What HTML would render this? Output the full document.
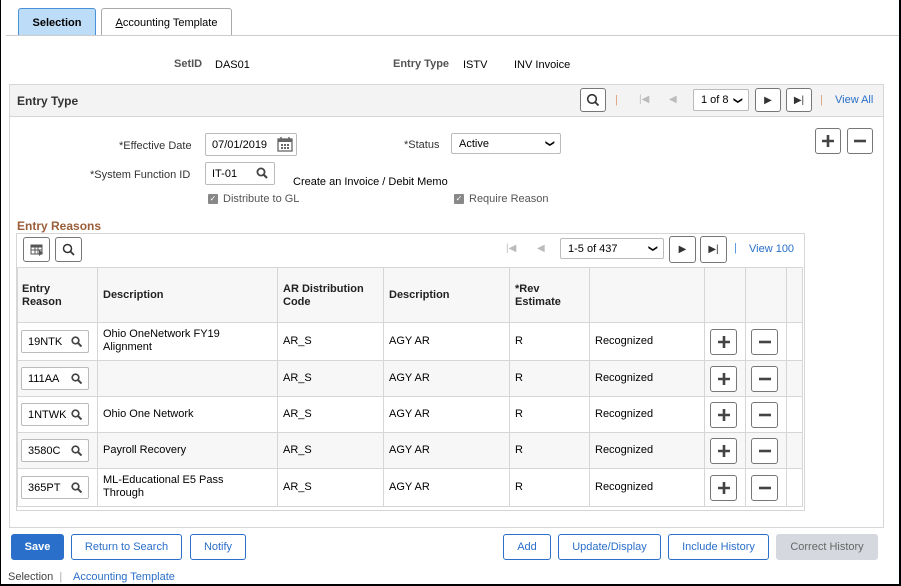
<!DOCTYPE html>
<html><head><style>
*{box-sizing:border-box;margin:0;padding:0}
body{width:901px;height:586px;position:relative;background:#fff;font-family:"Liberation Sans",Arial,sans-serif;font-size:11px;color:#000;overflow:hidden}
.a{position:absolute}
.frame{position:absolute;left:0;top:0;width:901px;height:586px;border-left:1px solid #000;border-right:2px solid #000;border-bottom:2px solid #000}
.lbl{color:#444;font-size:11px}
.btn{position:absolute;border:1px solid #777;border-radius:3px;background:#fff;display:flex;align-items:center;justify-content:center}
.bb{position:absolute;height:26px;top:534px;border:1px solid #2a6fc9;border-radius:3px;color:#2a6fc9;font-size:11px;display:flex;align-items:center;justify-content:center;background:#fff}
.link{color:#2a6fc9}
.inp{position:absolute;border:1px solid #bbb;border-radius:2px;background:#fff;font-size:11px;padding-left:6px;display:flex;align-items:center}
.vl{position:absolute;background:#d6d6d6;width:1px}
.hl{position:absolute;background:#d6d6d6;height:1px}
.cell{position:absolute;font-size:11px;line-height:13px}
.hd{font-weight:bold;color:#222}
</style></head><body>
<div class="frame"></div>
<div class="a" style="left:18px;top:8px;width:78px;height:28px;background:#bddcf7;border:1px solid #4a90d9;border-bottom:none;border-radius:3px 3px 0 0;font-weight:bold;font-size:11px;display:flex;align-items:center;justify-content:center">Selection</div>
<div class="a" style="left:101px;top:8px;width:131px;height:28px;border:1px solid #aaa;border-bottom:none;border-radius:3px 3px 0 0;font-size:11px;display:flex;align-items:center;justify-content:center"><u>A</u>ccounting Template</div>
<div class="hl" style="left:6px;top:35px;width:893px;background:#ccc"></div>
<div class="a lbl" style="left:174px;top:58px;font-weight:bold;color:#555">SetID</div>
<div class="a" style="left:215px;top:59px">DAS01</div>
<div class="a lbl" style="left:393px;top:58px;font-weight:bold;color:#555">Entry Type</div>
<div class="a" style="left:463px;top:59px">ISTV</div>
<div class="a" style="left:514px;top:59px">INV Invoice</div>
<div class="a" style="left:9px;top:84px;width:875px;height:444px;border:1px solid #d6d6d6"></div>
<div class="a" style="left:10px;top:85px;width:873px;height:32px;background:#f3f3f3;border-bottom:1px solid #d6d6d6"></div>
<div class="a" style="left:17px;top:94px;font-size:12px;font-weight:bold;color:#333">Entry Type</div>
<div class="btn" style="left:580px;top:88px;width:26px;height:24px"><svg width="14" height="14" viewBox="0 0 14 14"><circle cx="6" cy="6" r="4.3" fill="none" stroke="#333" stroke-width="1.6"/><path d="M9 9l3.5 3.5" stroke="#333" stroke-width="1.8"/></svg></div>
<div class="a" style="left:615px;top:94px;color:#d9a07a">|</div>
<div class="a" style="left:639px;top:94px;color:#bbb;font-size:10px">|◀</div>
<div class="a" style="left:669px;top:94px;color:#bbb;font-size:10px">◀</div>
<div class="inp" style="left:693px;top:89px;width:56px;height:22px;padding-left:7px">1 of 8 <span style="position:absolute;right:6px;font-size:9px;transform:rotate(90deg)">&#10095;</span></div>
<div class="btn" style="left:755px;top:88px;width:26px;height:24px;font-size:10px;color:#333">▶</div>
<div class="btn" style="left:786px;top:88px;width:26px;height:24px;font-size:10px;color:#333">▶|</div>
<div class="a" style="left:820px;top:94px;color:#d9a07a">|</div>
<div class="a link" style="left:835px;top:94px">View All</div>
<div class="a lbl" style="left:119px;top:140px;color:#333">*Effective Date</div>
<div class="inp" style="left:205px;top:133px;width:92px;height:23px">07/01/2019</div>
<svg class="a" style="left:277px;top:137px" width="16" height="15" viewBox="0 0 16 15"><rect x="1" y="2" width="14" height="12" fill="none" stroke="#666" stroke-width="1.3"/><rect x="1" y="2" width="14" height="3" fill="#666"/><path d="M4 0v3M12 0v3" stroke="#666" stroke-width="1.5"/><g fill="#666"><rect x="4" y="7" width="2" height="2"/><rect x="7" y="7" width="2" height="2"/><rect x="10" y="7" width="2" height="2"/><rect x="4" y="10" width="2" height="2"/><rect x="7" y="10" width="2" height="2"/><rect x="10" y="10" width="2" height="2"/></g></svg>
<div class="a lbl" style="left:404px;top:139px;color:#333">*Status</div>
<div class="inp" style="left:451px;top:133px;width:110px;height:21px;padding-left:7px">Active<span style="position:absolute;right:6px;font-size:9px;transform:rotate(90deg)">&#10095;</span></div>
<div class="btn" style="left:815px;top:128px;width:26px;height:26px"><svg width="14" height="14"><path d="M7 1v12M1 7h12" stroke="#444" stroke-width="2.6"/></svg></div>
<div class="btn" style="left:847px;top:128px;width:26px;height:26px"><svg width="14" height="14"><path d="M1 7h12" stroke="#444" stroke-width="2.6"/></svg></div>
<div class="a lbl" style="left:90px;top:169px;color:#333">*System Function ID</div>
<div class="inp" style="left:205px;top:162px;width:70px;height:23px">IT-01</div>
<svg class="a" style="left:256px;top:167px" width="12" height="12" viewBox="0 0 12 12"><circle cx="5" cy="5" r="3.6" fill="none" stroke="#444" stroke-width="1.8"/><path d="M7.5 7.5l3.5 3.5" stroke="#444" stroke-width="2.2"/></svg>
<div class="a" style="left:293px;top:176px">Create an Invoice / Debit Memo</div>
<div class="a" style="left:208px;top:194px;width:10px;height:10px;background:#888;border-radius:1px;color:#fff;font-size:8px;line-height:10px;text-align:center">✓</div>
<div class="a lbl" style="left:223px;top:193px;color:#555">Distribute to GL</div>
<div class="a" style="left:454px;top:194px;width:10px;height:10px;background:#888;border-radius:1px;color:#fff;font-size:8px;line-height:10px;text-align:center">✓</div>
<div class="a lbl" style="left:469px;top:193px;color:#555">Require Reason</div>
<div class="a" style="left:17px;top:219px;font-size:12px;font-weight:bold;color:#9b5e3a">Entry Reasons</div>
<div class="a" style="left:16px;top:233px;width:789px;height:278px;border:1px solid #d6d6d6"></div>
<div class="btn" style="left:23px;top:237px;width:27px;height:25px"><svg width="14" height="12"><rect x="1" y="1" width="11" height="9" fill="none" stroke="#555"/><rect x="1" y="1" width="11" height="2.5" fill="#555"/><path d="M1 6h11M5 3v7M8 3v7" stroke="#555"/><path d="M9 6l4 3-4 3z" fill="#555"/></svg></div>
<div class="btn" style="left:55px;top:237px;width:27px;height:25px"><svg width="13" height="13"><circle cx="5.5" cy="5.5" r="4" fill="none" stroke="#333" stroke-width="1.5"/><path d="M8.5 8.5l3.5 3.5" stroke="#333" stroke-width="1.7"/></svg></div>
<div class="a" style="left:506px;top:243px;color:#bbb;font-size:10px">|◀</div>
<div class="a" style="left:537px;top:243px;color:#bbb;font-size:10px">◀</div>
<div class="inp" style="left:560px;top:238px;width:104px;height:21px;padding-left:7px">1-5 of 437<span style="position:absolute;right:6px;font-size:9px;transform:rotate(90deg)">&#10095;</span></div>
<div class="btn" style="left:669px;top:236px;width:27px;height:27px;font-size:10px;color:#333">▶</div>
<div class="btn" style="left:700px;top:236px;width:27px;height:27px;font-size:10px;color:#333">▶|</div>
<div class="a" style="left:734px;top:242px;color:#4a90d9">|</div>
<div class="a link" style="left:749px;top:243px">View 100</div>
<div class="a" style="left:17px;top:267px;width:786px;height:55px;background:#f7f7f7"></div>
<div class="a" style="left:17px;top:360px;width:786px;height:36px;background:#f7f7f7"></div>
<div class="a" style="left:17px;top:432px;width:786px;height:36px;background:#f7f7f7"></div>
<div class="hl" style="left:17px;top:267px;width:786px"></div>
<div class="hl" style="left:17px;top:322px;width:786px"></div>
<div class="hl" style="left:17px;top:360px;width:786px"></div>
<div class="hl" style="left:17px;top:396px;width:786px"></div>
<div class="hl" style="left:17px;top:432px;width:786px"></div>
<div class="hl" style="left:17px;top:468px;width:786px"></div>
<div class="hl" style="left:17px;top:506px;width:786px"></div>
<div class="vl" style="left:17px;top:267px;height:239px"></div>
<div class="vl" style="left:97px;top:267px;height:239px"></div>
<div class="vl" style="left:277px;top:267px;height:239px"></div>
<div class="vl" style="left:383px;top:267px;height:239px"></div>
<div class="vl" style="left:509px;top:267px;height:239px"></div>
<div class="vl" style="left:589px;top:267px;height:239px"></div>
<div class="vl" style="left:704px;top:267px;height:239px"></div>
<div class="vl" style="left:745px;top:267px;height:239px"></div>
<div class="vl" style="left:786px;top:267px;height:239px"></div>
<div class="vl" style="left:802px;top:267px;height:239px"></div>
<div class="cell hd" style="left:22px;top:283px">Entry<br>Reason</div>
<div class="cell hd" style="left:103px;top:289px">Description</div>
<div class="cell hd" style="left:283px;top:283px">AR Distribution<br>Code</div>
<div class="cell hd" style="left:389px;top:289px">Description</div>
<div class="cell hd" style="left:515px;top:283px">*Rev<br>Estimate</div>
<div class="inp" style="left:21px;top:330px;width:68px;height:23px">19NTK</div>
<div class="cell" style="left:103px;top:328px">Ohio OneNetwork FY19<br>Alignment</div>
<div class="inp" style="left:21px;top:367px;width:68px;height:23px">111AA</div>
<div class="inp" style="left:21px;top:403px;width:68px;height:23px">1NTWK</div>
<div class="cell" style="left:103px;top:408px">Ohio One Network</div>
<div class="inp" style="left:21px;top:439px;width:68px;height:23px">3580C</div>
<div class="cell" style="left:103px;top:444px">Payroll Recovery</div>
<div class="inp" style="left:21px;top:476px;width:68px;height:23px">365PT</div>
<div class="cell" style="left:103px;top:474px">ML-Educational E5 Pass<br>Through</div>
<div class="cell" style="left:283px;top:335px">AR_S</div><div class="cell" style="left:389px;top:335px">AGY AR</div><div class="cell" style="left:515px;top:335px">R</div><div class="cell" style="left:595px;top:335px">Recognized</div>
<div class="cell" style="left:283px;top:372px">AR_S</div><div class="cell" style="left:389px;top:372px">AGY AR</div><div class="cell" style="left:515px;top:372px">R</div><div class="cell" style="left:595px;top:372px">Recognized</div>
<div class="cell" style="left:283px;top:408px">AR_S</div><div class="cell" style="left:389px;top:408px">AGY AR</div><div class="cell" style="left:515px;top:408px">R</div><div class="cell" style="left:595px;top:408px">Recognized</div>
<div class="cell" style="left:283px;top:444px">AR_S</div><div class="cell" style="left:389px;top:444px">AGY AR</div><div class="cell" style="left:515px;top:444px">R</div><div class="cell" style="left:595px;top:444px">Recognized</div>
<div class="cell" style="left:283px;top:481px">AR_S</div><div class="cell" style="left:389px;top:481px">AGY AR</div><div class="cell" style="left:515px;top:481px">R</div><div class="cell" style="left:595px;top:481px">Recognized</div>
<svg class="a" style="left:71px;top:336px" width="11" height="11"><circle cx="4.5" cy="4.5" r="3.3" fill="none" stroke="#444" stroke-width="1.7"/><path d="M7 7l3.5 3.5" stroke="#444" stroke-width="2"/></svg>
<svg class="a" style="left:71px;top:373px" width="11" height="11"><circle cx="4.5" cy="4.5" r="3.3" fill="none" stroke="#444" stroke-width="1.7"/><path d="M7 7l3.5 3.5" stroke="#444" stroke-width="2"/></svg>
<svg class="a" style="left:71px;top:409px" width="11" height="11"><circle cx="4.5" cy="4.5" r="3.3" fill="none" stroke="#444" stroke-width="1.7"/><path d="M7 7l3.5 3.5" stroke="#444" stroke-width="2"/></svg>
<svg class="a" style="left:71px;top:445px" width="11" height="11"><circle cx="4.5" cy="4.5" r="3.3" fill="none" stroke="#444" stroke-width="1.7"/><path d="M7 7l3.5 3.5" stroke="#444" stroke-width="2"/></svg>
<svg class="a" style="left:71px;top:482px" width="11" height="11"><circle cx="4.5" cy="4.5" r="3.3" fill="none" stroke="#444" stroke-width="1.7"/><path d="M7 7l3.5 3.5" stroke="#444" stroke-width="2"/></svg>
<div class="btn" style="left:710px;top:329px;width:27px;height:26px"><svg width="14" height="14"><path d="M7 1v12M1 7h12" stroke="#444" stroke-width="2.6"/></svg></div>
<div class="btn" style="left:751px;top:329px;width:27px;height:26px"><svg width="14" height="14"><path d="M1 7h12" stroke="#444" stroke-width="2.6"/></svg></div>
<div class="btn" style="left:710px;top:366px;width:27px;height:26px"><svg width="14" height="14"><path d="M7 1v12M1 7h12" stroke="#444" stroke-width="2.6"/></svg></div>
<div class="btn" style="left:751px;top:366px;width:27px;height:26px"><svg width="14" height="14"><path d="M1 7h12" stroke="#444" stroke-width="2.6"/></svg></div>
<div class="btn" style="left:710px;top:402px;width:27px;height:26px"><svg width="14" height="14"><path d="M7 1v12M1 7h12" stroke="#444" stroke-width="2.6"/></svg></div>
<div class="btn" style="left:751px;top:402px;width:27px;height:26px"><svg width="14" height="14"><path d="M1 7h12" stroke="#444" stroke-width="2.6"/></svg></div>
<div class="btn" style="left:710px;top:438px;width:27px;height:26px"><svg width="14" height="14"><path d="M7 1v12M1 7h12" stroke="#444" stroke-width="2.6"/></svg></div>
<div class="btn" style="left:751px;top:438px;width:27px;height:26px"><svg width="14" height="14"><path d="M1 7h12" stroke="#444" stroke-width="2.6"/></svg></div>
<div class="btn" style="left:710px;top:475px;width:27px;height:26px"><svg width="14" height="14"><path d="M7 1v12M1 7h12" stroke="#444" stroke-width="2.6"/></svg></div>
<div class="btn" style="left:751px;top:475px;width:27px;height:26px"><svg width="14" height="14"><path d="M1 7h12" stroke="#444" stroke-width="2.6"/></svg></div>
<div class="bb" style="left:11px;width:53px;background:#2a6fc9;color:#fff;font-weight:bold">Save</div>
<div class="bb" style="left:71px;width:111px">Return to Search</div>
<div class="bb" style="left:190px;width:56px">Notify</div>
<div class="bb" style="left:503px;width:48px">Add</div>
<div class="bb" style="left:558px;width:103px">Update/Display</div>
<div class="bb" style="left:668px;width:101px">Include History</div>
<div class="bb" style="left:776px;width:102px;background:#d5d9df;border-color:#d5d9df;color:#666">Correct History</div>
<div class="a" style="left:8px;top:571px;color:#444">Selection <span style="color:#aaa;margin-left:3px">|</span></div>
<div class="a link" style="left:73px;top:571px">Accounting Template</div>
</body></html>
